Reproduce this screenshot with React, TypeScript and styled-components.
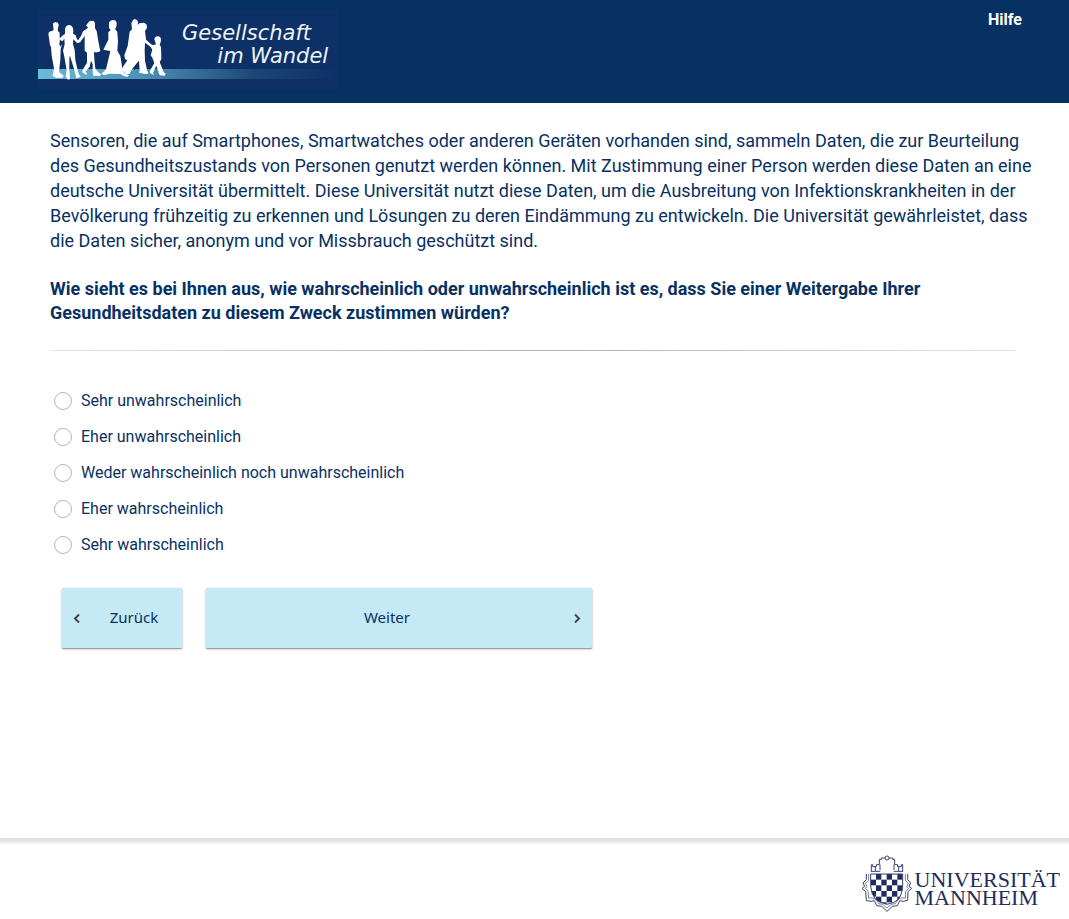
import React from "react";
import styled, { createGlobalStyle } from "styled-components";

const navy = "#083163";

const GlobalStyle = createGlobalStyle`
  *, *::before, *::after { box-sizing: border-box; }
  body {
    margin: 0;
    background: #fff;
    color: ${navy};
    font-family: Roboto, "Liberation Sans", sans-serif;
    font-size: 16px;
  }
`;

const Page = styled.div`
  display: flex;
  flex-direction: column;
  min-height: 100vh;
`;

const Header = styled.header`
  display: flex;
  justify-content: space-between;
  align-items: flex-start;
  padding: 10px 47px 13px 38px;
  background: ${navy};
`;

const ProjectLogo = styled.svg`
  display: block;
  width: 300px;
  height: 80px;
`;

const HelpLink = styled.a`
  color: #fff;
  font-weight: 700;
  line-height: 20px;
  text-decoration: none;
`;

const Main = styled.main`
  flex: 1;
  padding: 25px 33px 40px 50px;
`;

const Intro = styled.p`
  margin: 0 0 24px;
  font-size: 18px;
  line-height: 25px;
`;

const Question = styled.h1`
  margin: 0;
  font-size: 18px;
  font-weight: 700;
  line-height: 24px;
`;

const Divider = styled.hr`
  height: 1px;
  margin: 25px 20px 32px 0;
  border: 0;
  background: linear-gradient(to right, #e4e4e4, #b0b0b0 50%, #e4e4e4);
`;

const Options = styled.div`
  display: flex;
  flex-direction: column;
  align-items: flex-start;
`;

const Option = styled.label`
  display: flex;
  align-items: center;
  gap: 9px;
  min-height: 36px;
  padding-left: 4px;
  line-height: 20px;
  cursor: pointer;
`;

const Radio = styled.input`
  appearance: none;
  flex: none;
  width: 18px;
  height: 18px;
  margin: 0;
  border: 1px solid #b4b4b4;
  border-radius: 50%;
  background: #fff;
  &:checked { box-shadow: inset 0 0 0 4px #fff; background: ${navy}; }
`;

const Navigation = styled.div`
  display: flex;
  gap: 24px;
  max-width: 554px;
  padding: 25px 12px 0;
`;

const NavButton = styled.button<{ $wide?: boolean }>`
  display: flex;
  flex: ${(p) => (p.$wide ? "1" : "0 0 120px")};
  align-items: center;
  height: 60px;
  padding: 0 11px;
  padding-${(p) => (p.$wide ? "left" : "right")}: 0;
  border: 0;
  border-radius: 1px;
  background: #c5e9f5;
  box-shadow: 0 1px 1px rgba(0, 0, 0, 0.3), 0 1px 3px rgba(0, 0, 0, 0.25);
  color: ${navy};
  font-family: "Noto Sans", "Open Sans", sans-serif;
  font-size: 15px;
  cursor: pointer;
`;

const NavLabel = styled.span`
  flex: 1;
  padding-bottom: 2px;
  text-align: center;
`;

const Chevron = styled.svg<{ $side: "left" | "right" }>`
  flex: none;
  width: 8px;
  height: 10px;
  margin-${(p) => (p.$side === "left" ? "right" : "left")}: 5px;
`;

const Footer = styled.footer`
  display: flex;
  justify-content: flex-end;
  padding: 17px 9px 6px;
  background: linear-gradient(to bottom, #dcdcdc, #e6e6e6 3px, #fff 7px);
`;

const University = styled.a`
  display: flex;
  align-items: center;
  color: #1f2c5c;
  text-decoration: none;
`;

const Crest = styled.svg`
  width: 54px;
  height: 58px;
`;

const UniversityName = styled.span`
  padding-top: 9px;
  font-family: "Liberation Serif", serif;
  font-size: 22px;
  line-height: 18px;
`;

const options = [
  "Sehr unwahrscheinlich",
  "Eher unwahrscheinlich",
  "Weder wahrscheinlich noch unwahrscheinlich",
  "Eher wahrscheinlich",
  "Sehr wahrscheinlich",
];

function Silhouettes() {
  return (
    <g fill="#fff">
      <path d="M69 57Q69 51 78 52Q86 52 86 61L84 70L83 77L89 83L89 101L95 123L92 132L91 165L87 201L101 212L98 218L80 219L68 213L72 190L65 152L63 126L60 120L55 86L58 80L71 76Z" />
      <path d="M105 72Q108 59 119 60Q130 63 130 78L129 86L137 91L141 103L147 107L154 103L151 111L142 115L130 103L129 117L134 135L136 165L145 205L152 215L138 220L137 210L131 188L120 153L118 158L118 190L120 222L114 224L107 215L110 196L103 155L99 137L104 118L103 101L97 109L88 104L87 101L99 91L105 86Z" />
      <path d="M173 55L178 49L189 47Q196 50 195 57L195 70L200 78L205 109L211 139L202 142L192 142L193 163L196 191L208 205L213 207L210 213L190 212L188 203L188 178L183 167L179 185L166 200L172 206L168 209L157 202L158 194L171 173L171 143L164 137L164 93L150 112L143 108L153 93L159 79L173 70L173 65L168 62Z" />
      <path d="M237 61Q235 48 247 45Q259 44 260 55Q260 68 255 72L262 80L264 109L262 137L271 153L277 190L283 204L297 211L291 216L277 211L271 207L236 206L224 211L214 207L228 193L236 160L241 138L220 134L235 104L235 82L242 75L237 69Z" />
      <path d="M304 55L309 45L315 42Q323 43 324 51L323 60L328 55L340 53Q351 54 351 65Q351 73 345 77L348 104L367 121L374 124L370 131L345 113L344 137L345 167L352 199L356 204L350 208L327 203L329 196L327 168L308 190L298 207L290 208L280 199L275 196L278 187L292 166L285 162L283 151L293 123L299 80L306 73Z" />
      <path d="M373 103Q374 94 384 94Q393 95 393 105Q392 114 389 118L393 127L394 163L389 171L401 201L407 207L404 212L390 211L387 206L379 182L369 204L372 211L360 204L359 199L373 174L367 158L362 151L367 134L360 123L368 121L378 118Z" />
      <path d="M88 118L90 103L96 115L91 126ZM318 178L327 168L325 190L312 194Z" fill="#0b3063" />
    </g>
  );
}

function GesellschaftLogo() {
  return (
    <ProjectLogo viewBox="24 15 900 240" role="img" aria-label="Gesellschaft im Wandel">
      <defs>
        <linearGradient id="band" x1="0" x2="1">
          <stop offset="0" stopColor="#69bdd7" />
          <stop offset=".35" stopColor="#4d91b5" />
          <stop offset=".72" stopColor="#1d4775" />
          <stop offset="1" stopColor="#0d3066" />
        </linearGradient>
      </defs>
      <rect x="24" y="15" width="900" height="240" fill="#0d3066" />
      <rect x="24" y="192" width="900" height="30" fill="url(#band)" />
      <Silhouettes />
      <g fill="#eef3f8" fontFamily="'DejaVu Sans', sans-serif" fontStyle="italic" fontSize="63">
        <text x="456" y="104">Gesellschaft</text>
        <text x="562" y="173">im Wandel</text>
      </g>
    </ProjectLogo>
  );
}

const shieldOutline = "M37 69H133V105Q131 132 119 146Q108 156 86 160Q62 155 52 145Q39 131 37 105Z";

function UniversityCrest() {
  return (
    <Crest viewBox="8 12 162 174" aria-hidden="true">
      <defs>
        <clipPath id="shield">
          <path d={shieldOutline} />
        </clipPath>
      </defs>
      <g clipPath="url(#shield)" fill="#1f2c5c">
        {[0, 1, 2, 3, 4, 5].map((row) =>
          [0, 1, 2, 3, 4, 5].map((col) =>
            (row + col) % 2 === 1 ? (
              <rect key={`${row}-${col}`} x={37 + col * 16} y={69 + row * 17} width="16" height="17" />
            ) : null
          )
        )}
      </g>
      <g fill="none" stroke="#37436f" strokeWidth="3">
        <path d={shieldOutline} />
        <path d="M39 62V41H43V47H54V41H63V25H69V21H80M92 21H103V25H109V41H118V47H129V41H133V62M38 61H66M106 61H134M65 41V57M107 41V57M51 47V60M121 47V60" />
        <circle cx="86" cy="21" r="6" />
        <path d="M24 69V86L14 96L19 106L11 112L22 122L24 149L38 151L48 149L55 164L70 166L86 181L102 166L117 164L124 149L135 151L148 148L149 122L160 112L152 106L157 96L148 86V69" />
        <path d="M31 69V88L21 97L26 107L20 112L29 121L31 141L44 141L53 145L61 158L73 160L86 171L99 160L111 158L119 145L128 141L141 141L142 121L151 112L145 107L150 97L141 88V69" strokeWidth="2" />
      </g>
    </Crest>
  );
}

export default function App() {
  return (
    <>
      <GlobalStyle />
      <Page>
        <Header>
          <GesellschaftLogo />
          <HelpLink href="#hilfe">Hilfe</HelpLink>
        </Header>
        <Main>
          <Intro>
            Sensoren, die auf Smartphones, Smartwatches oder anderen Geräten vorhanden sind, sammeln Daten, die zur
            Beurteilung des Gesundheitszustands von Personen genutzt werden können. Mit Zustimmung einer Person werden
            diese Daten an eine deutsche Universität übermittelt. Diese Universität nutzt diese Daten, um die
            Ausbreitung von Infektionskrankheiten in der Bevölkerung frühzeitig zu erkennen und Lösungen zu deren
            Eindämmung zu entwickeln. Die Universität gewährleistet, dass die Daten sicher, anonym und vor Missbrauch
            geschützt sind.
          </Intro>
          <Question id="question">
            Wie sieht es bei Ihnen aus, wie wahrscheinlich oder unwahrscheinlich ist es, dass Sie einer Weitergabe
            Ihrer Gesundheitsdaten zu diesem Zweck zustimmen würden?
          </Question>
          <Divider />
          <form onSubmit={(e) => e.preventDefault()}>
            <Options role="radiogroup" aria-labelledby="question">
              {options.map((label, i) => (
                <Option key={label} htmlFor={`answer-${i}`}>
                  <Radio type="radio" name="answer" id={`answer-${i}`} value={i + 1} />
                  {label}
                </Option>
              ))}
            </Options>
            <Navigation>
              <NavButton type="button">
                <Chevron $side="left" viewBox="0 0 8 10" aria-hidden="true">
                  <path d="M6 1.5L2 5.5L6 9.5" fill="none" stroke="#444" strokeWidth="2" />
                </Chevron>
                <NavLabel>Zurück</NavLabel>
              </NavButton>
              <NavButton type="submit" $wide>
                <NavLabel>Weiter</NavLabel>
                <Chevron $side="right" viewBox="0 0 8 10" aria-hidden="true">
                  <path d="M2 1.5L6 5.5L2 9.5" fill="none" stroke="#444" strokeWidth="2" />
                </Chevron>
              </NavButton>
            </Navigation>
          </form>
        </Main>
        <Footer>
          <University href="#universitaet">
            <UniversityCrest />
            <UniversityName>
              UNIVERSITÄT
              <br />
              MANNHEIM
            </UniversityName>
          </University>
        </Footer>
      </Page>
    </>
  );
}
